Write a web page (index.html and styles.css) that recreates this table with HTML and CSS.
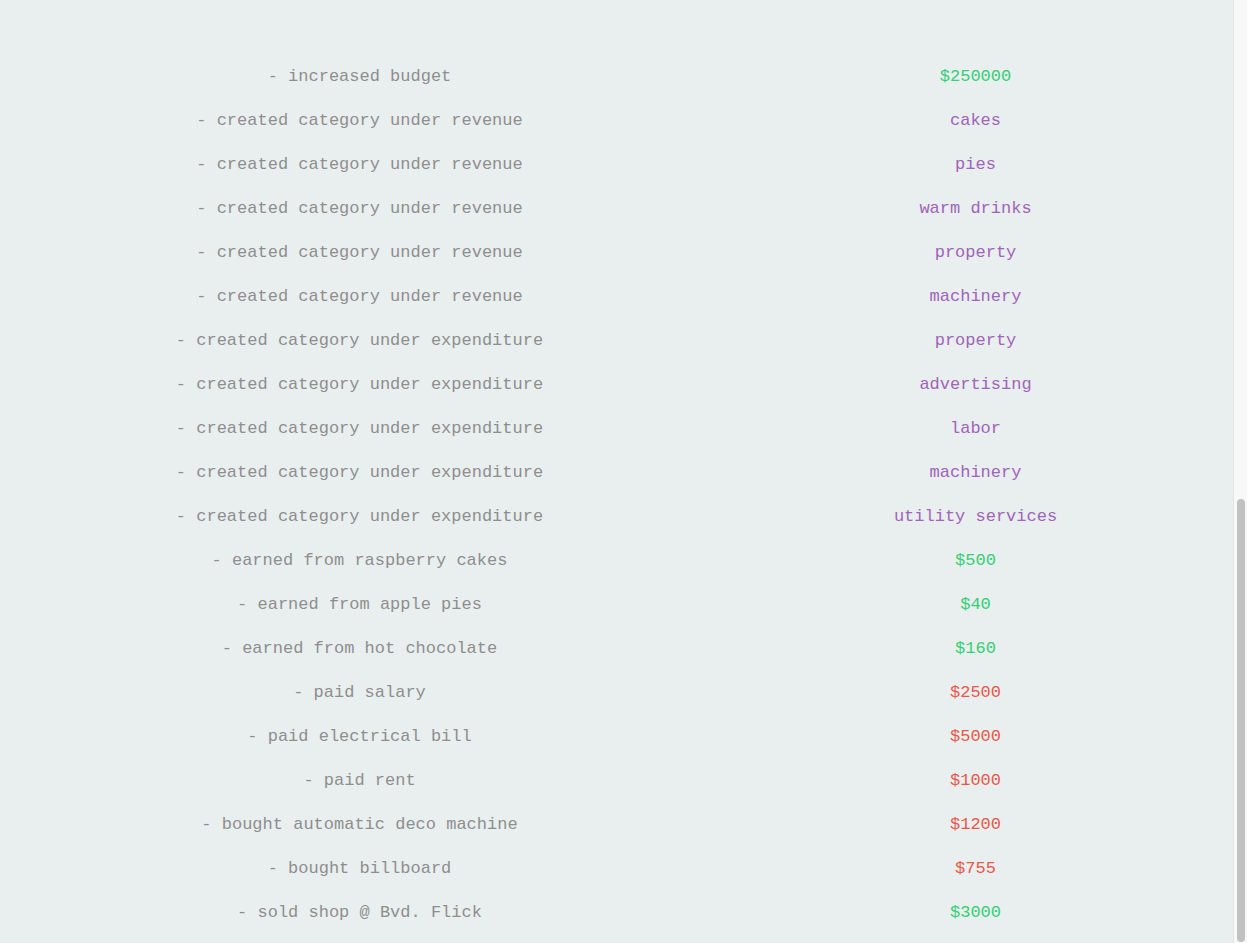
FILE: index.html
```html
<!DOCTYPE html>
<html lang="en">
<head>
<meta charset="utf-8">
<title>Log</title>
<link rel="stylesheet" href="styles.css">
</head>
<body>
<div class="page">
  <main class="log">
    <div class="row"><span class="desc">- increased budget</span><span class="val gain">$250000</span></div>
    <div class="row"><span class="desc">- created category under revenue</span><span class="val cat">cakes</span></div>
    <div class="row"><span class="desc">- created category under revenue</span><span class="val cat">pies</span></div>
    <div class="row"><span class="desc">- created category under revenue</span><span class="val cat">warm drinks</span></div>
    <div class="row"><span class="desc">- created category under revenue</span><span class="val cat">property</span></div>
    <div class="row"><span class="desc">- created category under revenue</span><span class="val cat">machinery</span></div>
    <div class="row"><span class="desc">- created category under expenditure</span><span class="val cat">property</span></div>
    <div class="row"><span class="desc">- created category under expenditure</span><span class="val cat">advertising</span></div>
    <div class="row"><span class="desc">- created category under expenditure</span><span class="val cat">labor</span></div>
    <div class="row"><span class="desc">- created category under expenditure</span><span class="val cat">machinery</span></div>
    <div class="row"><span class="desc">- created category under expenditure</span><span class="val cat">utility services</span></div>
    <div class="row"><span class="desc">- earned from raspberry cakes</span><span class="val gain">$500</span></div>
    <div class="row"><span class="desc">- earned from apple pies</span><span class="val gain">$40</span></div>
    <div class="row"><span class="desc">- earned from hot chocolate</span><span class="val gain">$160</span></div>
    <div class="row"><span class="desc">- paid salary</span><span class="val loss">$2500</span></div>
    <div class="row"><span class="desc">- paid electrical bill</span><span class="val loss">$5000</span></div>
    <div class="row"><span class="desc">- paid rent</span><span class="val loss">$1000</span></div>
    <div class="row"><span class="desc">- bought automatic deco machine</span><span class="val loss">$1200</span></div>
    <div class="row"><span class="desc">- bought billboard</span><span class="val loss">$755</span></div>
    <div class="row"><span class="desc">- sold shop @ Bvd. Flick</span><span class="val gain">$3000</span></div>
  </main>
  <div class="scrollbar" aria-hidden="true"><div class="thumb"></div></div>
</div>
</body>
</html>
```

FILE: styles.css
```css
html {
  background: #e9eeee;
}
body {
  margin: 0;
  font-family: "Liberation Mono", "DejaVu Sans Mono", monospace;
  font-size: 17px;
  color: #8e8e8e;
}
.page {
  display: flex;
  height: 943px;
  overflow: hidden;
}
.log {
  flex: 1;
  padding-top: 54px;
}
.row {
  display: grid;
  grid-template-columns: 719px 513px;
  height: 44px;
  align-items: center;
  text-align: center;
}
.desc {
  color: #8e8e8e;
}
.gain {
  color: #34cf76;
}
.cat {
  color: #a064ba;
}
.loss {
  color: #e95749;
}
.scrollbar {
  width: 14px;
  flex: none;
  background: #f8f8f8;
  border-left: 1px solid #e4e4e4;
  padding: 499px 2px 1px 3px;
  box-sizing: border-box;
  display: flex;
}
.thumb {
  width: 9px;
  flex: 1;
  background: #c1c1c1;
  border-radius: 5px;
}
```
